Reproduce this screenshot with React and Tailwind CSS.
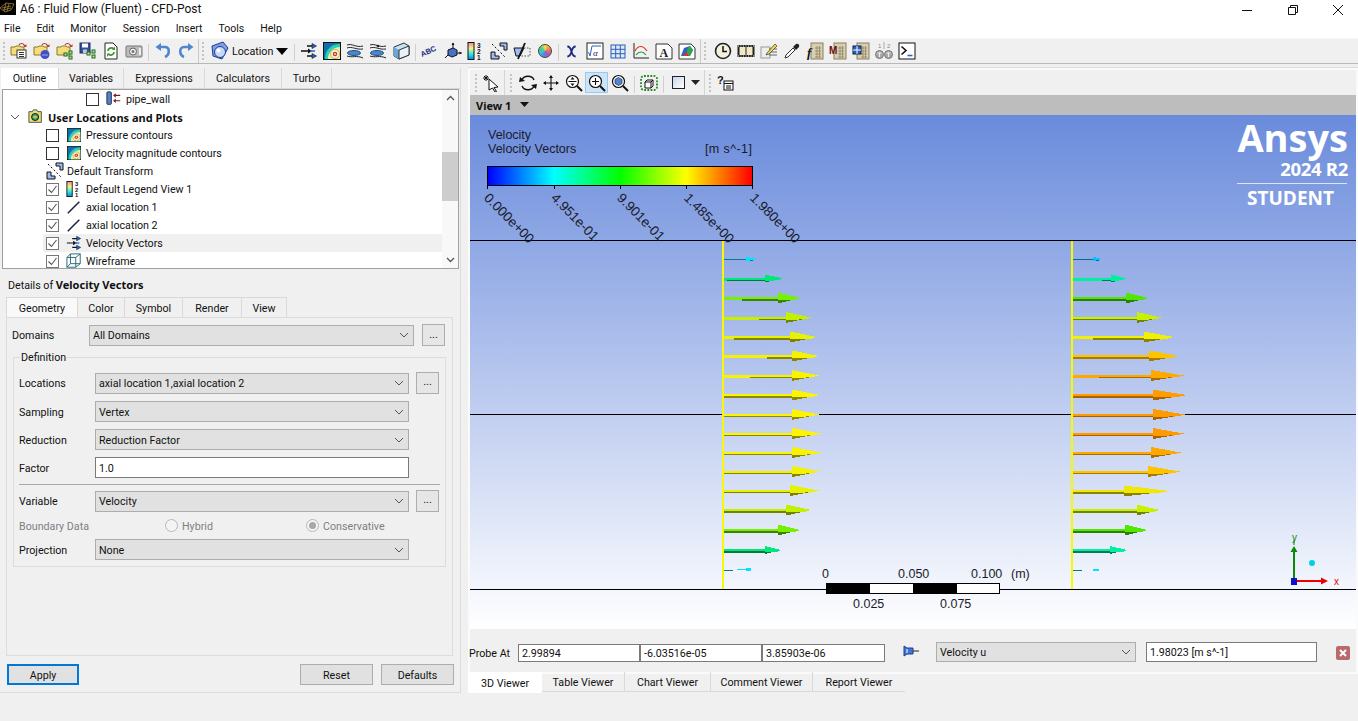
import React from "react";

const UI = "font-['Roboto',sans-serif]";
const BOLD = "font-['Noto_Sans',sans-serif] font-bold";

// small svg wrapper for toolbar icons, drawn on an 18 unit grid
function Ic({ children, s = 18 }) {
  return (
    <svg width={s} height={s} viewBox="0 0 18 18" fill="none">
      {children}
    </svg>
  );
}

function Btn({ children }) {
  return <div className="w-[23px] h-[24px] shrink-0 flex items-center justify-center">{children}</div>;
}

function Sep({ w = "w-[6px]" }) {
  return (
    <div className={`${w} shrink-0 flex justify-center`}>
      <div className="w-px h-[17px] bg-[#d0d0d0] mt-[3px]" />
    </div>
  );
}

function Grip() {
  return (
    <div className="w-[6px] shrink-0 flex flex-col gap-[2px] items-center justify-center">
      {[0, 1, 2, 3, 4].map((i) => (
        <div key={i} className="w-[2px] h-[2px] bg-[#c4c4c4]" />
      ))}
    </div>
  );
}

function Folder({ children }) {
  return (
    <Ic>
      <path d="M1 5h4l1-1h4l1 1h3v8H1z" fill="#f7dc7a" stroke="#8a7a2a" />
      <path d="M9 3c1-2 4-2 5 0l1 1" stroke="#c0392b" strokeWidth="1.2" />
      <path d="M16.5 2v3h-3z" fill="#c0392b" />
      {children}
    </Ic>
  );
}

function TreeNodes({ x = 8, y = 9 }) {
  return (
    <g fill="#b6e3a8" stroke="#1d6b1d">
      <rect x={x} y={y + 2} width="3" height="3" />
      <rect x={x + 5} y={y} width="3" height="3" />
      <rect x={x + 5} y={y + 5} width="3" height="3" />
    </g>
  );
}

const IconFolderDoc = () => (
  <Folder>
    <rect x="7" y="8" width="9" height="8" fill="#fff" stroke="#333" />
    <path d="M9 10.5h5M9 12.5h5M9 14.5h5" stroke="#333" />
  </Folder>
);
const IconFolderDots = () => (
  <Folder>
    <circle cx="12" cy="12.5" r="4.5" fill="#3f51c8" />
    <path d="M9.5 13h1M11.5 13h1M13.5 13h1" stroke="#fff" />
  </Folder>
);
const IconFolderTree = () => (
  <Folder>
    <TreeNodes />
  </Folder>
);
const IconSaveTree = () => (
  <Ic>
    <rect x="1" y="1" width="10" height="10" fill="#2f4f9f" stroke="#1c2f66" />
    <rect x="3" y="1.5" width="6" height="4" fill="#fff" />
    <rect x="4" y="7.5" width="4" height="3.5" fill="#c8c8c8" />
    <TreeNodes x={8} y={8} />
  </Ic>
);
const IconReload = () => (
  <Ic>
    <path d="M3 1h8l4 4v12H3z" fill="#fff" stroke="#222" />
    <path d="M6 9c0-3 4-4 6-2M12 10c0 3-4 4-6 2" stroke="#3f9a2b" strokeWidth="1.6" />
    <path d="M13 4.5v3.5h-3zM5 15v-3.500h3z" fill="#3f9a2b" />
  </Ic>
);
const IconCamera = () => (
  <Ic>
    <rect x="1" y="4" width="16" height="11" rx="1" fill="#bdbdbd" stroke="#777" />
    <circle cx="8" cy="9.500" r="3.500" fill="#eee" stroke="#666" />
    <circle cx="8" cy="9.500" r="1.500" fill="#777" />
    <rect x="14" y="6" width="2" height="7" fill="#eee" />
  </Ic>
);
const IconUndo = () => (
  <Ic>
    <path d="M5 5h6c5 0 5 8 0 10" stroke="#4f86cf" strokeWidth="2.600" />
    <path d="M7 1v8L1.500 5z" fill="#4f86cf" />
  </Ic>
);
const IconRedo = () => (
  <Ic>
    <path d="M13 5H7c-5 0-5 8 0 10" stroke="#4f86cf" strokeWidth="2.600" />
    <path d="M11 1v8l5.500-4z" fill="#4f86cf" />
  </Ic>
);
const IconLocation = () => (
  <svg width="20" height="20" viewBox="0 0 20 20" fill="none">
    <path d="M2 5l11-4 5 6-6 11-9-3z" fill="#7da0e8" stroke="#1f3f8f" />
    <circle cx="10" cy="11" r="5.500" fill="#c8d8f5" stroke="#1f3f8f" />
    <circle cx="8.500" cy="9.500" r="2" fill="#fff" />
  </svg>
);
const IconVectors = ({ s = 18 }) => (
  <Ic s={s}>
    <path d="M1 9h7M7 4h6M7 14h6" stroke="#111" strokeWidth="1.300" />
    <path d="M8 6.500V11.500L12 9z" fill="#111" />
    <path d="M12 1.500v5l4.500-2.500zM12 11.500v5l4.500-2.500z" fill="#2b62c4" stroke="#111" strokeWidth=".6" />
    <path d="M10 9h5" stroke="#2b62c4" strokeWidth="1.500" />
  </Ic>
);
const IconContour = ({ s = 18 }) => (
  <Ic s={s}>
    <rect x=".5" y=".5" width="17" height="17" fill="#0f6fb0" stroke="#111" />
    <path d="M2 17C2 8 8 2 17 2v15z" fill="#26d0b0" />
    <path d="M5 17c0-7 5-12 12-12v12z" fill="#e8f2b0" />
    <circle cx="12" cy="12" r="4.500" fill="#f4f4f4" stroke="#d8b030" />
    <circle cx="12" cy="12" r="2.300" fill="#d8342b" />
    <circle cx="12" cy="12" r="1" fill="#f4e060" />
  </Ic>
);
const IconStream = ({ dots }) => (
  <Ic>
    <path d="M1 3c5-2 9 3 16 1M1 6c5-2 9 2 16 1" stroke="#222" />
    <path d="M1 14c5 2 10-1 16 2" stroke="#222" />
    <ellipse cx="8" cy="11" rx="6.500" ry="2.500" fill="#4a86c8" stroke="#1f4f8a" />
    {dots && <circle cx="9" cy="4" r="1.300" fill="#222" />}
  </Ic>
);
const IconCube = () => (
  <Ic>
    <path d="M2 5l10-4 5 3v9l-10 4-5-3z" fill="#c6e3f5" stroke="#333" />
    <path d="M7 8v9l-5-3V5z" fill="#6aa7d8" />
    <path d="M7 8l10-4v9L7 17z" fill="#e8f2fa" stroke="#333" />
  </Ic>
);
const IconAbc = () => (
  <svg width="18" height="18" viewBox="0 0 18 18" fill="none" className="overflow-visible">
    <text x="1" y="15" transform="rotate(-25 1 15)" fontSize="7.500" fontWeight="700" fill="#1c2a80" fontFamily="'Liberation Sans',sans-serif">
      ABC
    </text>
  </svg>
);
const IconAxisCube = () => (
  <Ic>
    <path d="M4 8l5-2 4 2v5l-5 2-4-2z" fill="#4a6fc8" stroke="#111" />
    <path d="M9 6V1M13 11h4.500M4 13l-3 3" stroke="#111" />
    <path d="M7.500 3L9 .5 10.500 3zM15.500 9.500L18 11l-2.500 1.500z" fill="#111" />
  </Ic>
);
const IconLegend = ({ s = 18 }) => (
  <Ic s={s}>
    <defs>
      <linearGradient id="lg" x1="0" y1="0" x2="0" y2="1">
        <stop offset="0" stopColor="#f08a9a" />
        <stop offset=".35" stopColor="#f6f28a" />
        <stop offset=".7" stopColor="#20e8e0" />
        <stop offset="1" stopColor="#1080f0" />
      </linearGradient>
    </defs>
    <rect x="1" y=".5" width="6" height="17" fill="url(#lg)" stroke="#111" />
    <text x="10" y="6" fontSize="6.500" fontWeight="700" fill="#111" fontFamily="'Liberation Sans',sans-serif">3</text>
    <text x="10" y="12" fontSize="6.500" fontWeight="700" fill="#111" fontFamily="'Liberation Sans',sans-serif">2</text>
    <text x="10" y="18" fontSize="6.500" fontWeight="700" fill="#111" fontFamily="'Liberation Sans',sans-serif">1</text>
  </Ic>
);
const IconTransform = () => (
  <Ic>
    <path d="M10 1h7v7h-3V4h-4z" fill="#9dbcf0" stroke="#111" />
    <path d="M1 10h4v4h4v3H1z" fill="#9dbcf0" stroke="#111" />
    <path d="M2 2l14 14" stroke="#111" strokeDasharray="2 2" />
  </Ic>
);
const IconClip = () => (
  <Ic>
    <path d="M1 6h10l-4 8H3z" fill="#9dbcf0" stroke="#111" />
    <path d="M11 6h6v8H7" stroke="#555" strokeDasharray="1.500 1.500" />
    <path d="M12 1L5 17" stroke="#111" strokeWidth="1.800" />
  </Ic>
);
const IconWheel = () => (
  <div className="w-[14px] h-[14px] rounded-full border border-[#444] bg-[conic-gradient(#f5e050,#f09040,#e85a8a,#8a60d8,#4a90e8,#30c8e0,#50d070,#f5e050)]" />
);
const IconXExpr = () => (
  <Ic s={15}>
    <path d="M4 3c3 0 4 2 5 6s2 6 5 6M14 3c-3 0-4 2-5 6s-2 6-5 6" stroke="#1c2a80" strokeWidth="2.200" />
  </Ic>
);
const IconFunc = () => (
  <Ic>
    <rect x="1" y="1" width="16" height="16" fill="#fff" stroke="#222" />
    <path d="M2.500 10l1.500 4 2-10h9" stroke="#2b62c4" />
    <text x="7" y="14" fontSize="9" fill="#1c2a80" fontStyle="italic" fontFamily="'Liberation Serif',serif">α</text>
  </Ic>
);
const IconTable = () => (
  <Ic>
    <rect x="2" y="3" width="14" height="13" fill="#dfe9fa" stroke="#2b5fb8" />
    <path d="M2 7.300h14M2 11.700h14M6.700 3v13M11.300 3v13" stroke="#2b5fb8" />
  </Ic>
);
const IconChart = () => (
  <Ic>
    <path d="M2 1v15h15" stroke="#222" />
    <path d="M3 9c3-6 8-6 12 0" stroke="#d8342b" strokeWidth="1.200" />
    <path d="M4 13c3-4 7-4 10 0" stroke="#2f9a3a" strokeWidth="1.200" />
  </Ic>
);
const IconPageA = () => (
  <Ic>
    <path d="M1 2h12l4 4v11H1z" fill="#fff" stroke="#333" />
    <text x="4.500" y="14.500" fontSize="12" fontWeight="700" fill="#222" fontFamily="'Liberation Serif',serif">A</text>
  </Ic>
);
const IconPageColor = () => (
  <Ic>
    <path d="M1 2h12l4 4v11H1z" fill="#fff" stroke="#333" />
    <path d="M3 14l3-8 6-2 3 4-3 6z" fill="#2b62c4" />
    <path d="M8 14l2-9 2-1 3 4-3 6z" fill="#2fa84a" />
    <path d="M5 14l3-4 3 4z" fill="#d8342b" />
  </Ic>
);
const IconClock = () => (
  <Ic>
    <circle cx="9" cy="9" r="7.500" fill="#f5f0dc" stroke="#222" strokeWidth="1.600" />
    <path d="M9 4v5.500h4" stroke="#111" strokeWidth="1.500" />
  </Ic>
);
const IconFilm = () => (
  <Ic>
    <rect x=".5" y="3" width="17" height="12" fill="#222" />
    <rect x="2.500" y="5" width="6" height="8" fill="#f2e8c8" />
    <rect x="9.500" y="5" width="6" height="8" fill="#f2e8c8" />
    <path d="M1 4h16M1 14h16" stroke="#eee" strokeDasharray="1 1.500" />
  </Ic>
);
const IconNotes = () => (
  <Ic>
    <rect x="1" y="5" width="9" height="11" fill="#eee" stroke="#999" />
    <path d="M9 7h8M9 10h8M9 13h8" stroke="#666" />
    <path d="M7 11L15 2l2 2-8 8-3 1z" fill="#f5d840" stroke="#333" strokeWidth=".7" />
  </Ic>
);
const IconDropper = () => (
  <Ic>
    <path d="M2 16l1-3 7-7 2 2-7 7z" fill="#fff" stroke="#333" />
    <path d="M10 5l3-3c2-1 4 1 3 3l-3 3z" fill="#222" />
  </Ic>
);
function Calc({ children }) {
  return (
    <Ic>
      <rect x="5" y="1" width="12" height="16" fill="#d8ceb0" stroke="#8a8060" />
      <path d="M9 6h6M9 9h6M9 12h6M9 15h6M11 4v12M13.500 4v12" stroke="#8a8060" strokeWidth=".7" />
      {children}
    </Ic>
  );
}
const IconCalcF = () => (
  <Calc>
    <text x="1" y="15" fontSize="13" fontWeight="700" fontStyle="italic" fill="#111" fontFamily="'Liberation Serif',serif">f</text>
  </Calc>
);
const IconCalcM = () => (
  <Calc>
    <text x="0" y="12" fontSize="10" fontWeight="700" fill="#6b0f0f" fontFamily="'Liberation Sans',sans-serif">M</text>
  </Calc>
);
const IconCalcB = () => (
  <Calc>
    <rect x="1" y="4" width="8" height="8" fill="#2b5fd0" stroke="#123" />
    <path d="M1 8h8M5 4v8" stroke="#fff" />
  </Calc>
);
const IconBino = () => (
  <Ic>
    <text x="3" y="6" fontSize="6" fill="#888" fontFamily="'Liberation Sans',sans-serif">1</text>
    <text x="12" y="6" fontSize="6" fill="#888" fontFamily="'Liberation Sans',sans-serif">2</text>
    <path d="M9 0v7" stroke="#aaa" />
    <circle cx="4.500" cy="12.500" r="4" fill="#aaa" stroke="#777" />
    <circle cx="13.500" cy="12.500" r="4" fill="#aaa" stroke="#777" />
    <path d="M2.500 11h4M4.500 11v4M11.500 11h4M13.500 11v4" stroke="#eee" />
  </Ic>
);
const IconTerm = () => (
  <Ic>
    <rect x="1" y="1" width="16" height="16" fill="#fff" stroke="#111" />
    <path d="M3.500 4.500L8 8.500l-4.500 4" stroke="#111" strokeWidth="1.600" />
    <path d="M9.500 13.500h5" stroke="#2b62c4" strokeWidth="1.600" />
  </Ic>
);
const IconPick = () => (
  <Ic>
    <path d="M6 5l9 8-4 .5 2.500 4-1.500.5-2.500-4L6 16z" fill="#fff" stroke="#111" />
    <path d="M3 1v6M0 4h6M1 2l4 4M5 2L1 6" stroke="#111" />
  </Ic>
);
const IconRotate = () => (
  <Ic>
    <path d="M15 6C13 1 5 1 3 6M3 12c2 5 10 5 12 0" stroke="#111" strokeWidth="1.400" />
    <path d="M1 3l5 4-6 1zM17 15l-5-4 6-1z" fill="#111" />
  </Ic>
);
const IconPan = () => (
  <Ic>
    <path d="M9 2v14M2 9h14" stroke="#111" strokeWidth="1.100" />
    <path d="M7 4l2-3 2 3zM7 14l2 3 2-3zM4 7L1 9l3 2zM14 7l3 2-3 2z" fill="#111" />
  </Ic>
);
function Lens({ children }) {
  return (
    <Ic>
      <circle cx="7.500" cy="7.500" r="6" fill="#fff" stroke="#111" strokeWidth="1.200" />
      <path d="M12 12l5 5" stroke="#111" strokeWidth="2" />
      {children}
    </Ic>
  );
}
const IconZoomFit = () => (
  <Lens>
    <path d="M3.500 7.500h8" stroke="#111" />
    <path d="M5.500 5.500l2-2.500 2 2.500zM5.500 9.500l2 2.500 2-2.500z" fill="#111" />
  </Lens>
);
const IconZoomBox = () => (
  <Lens>
    <path d="M7.500 4v7M4 7.500h7" stroke="#111" strokeWidth="1.100" />
  </Lens>
);
const IconZoomCube = () => (
  <Lens>
    <path d="M4 5.500l3.500-2 3.500 2v4l-3.500 2-3.500-2z" fill="#4f86cf" stroke="#1c2a50" strokeWidth=".7" />
  </Lens>
);
const IconDotted = () => (
  <Ic>
    <rect x="1" y="2" width="16" height="14" rx="3" stroke="#1f8a1f" strokeWidth="1.800" strokeDasharray="1.800 1.400" />
    <path d="M5 8l2-2h6v6l-2 2H5z" fill="#fff" stroke="#111" />
    <path d="M5 8h6v6M11 8l2-2" stroke="#111" />
  </Ic>
);
const IconWireframe = () => (
  <Ic s={16}>
    <path d="M1 5h10v11H1zM5 1h11v11H5zM1 5l4-4M11 5l5-4M11 16l5-4M1 16l4-4" stroke="#2d6a78" strokeWidth="1.100" />
  </Ic>
);
const IconLine = () => (
  <Ic s={16}>
    <path d="M2 16L15 3" stroke="#1c2340" strokeWidth="1.700" />
  </Ic>
);
const IconWall = () => (
  <Ic s={16}>
    <rect x="1" y="1" width="5" height="14" rx="1" fill="#4a86d8" stroke="#222" />
    <path d="M16 5H9M16 11H9" stroke="#7a1a1a" strokeWidth="1.300" />
    <path d="M11 2.500L8 5l3 2.500zM11 8.500L8 11l3 2.500z" fill="#7a1a1a" />
  </Ic>
);
const IconFolderUser = () => (
  <Ic s={16}>
    <path d="M1 3h4l1-2h4l1 2h4v12H1z" fill="#e8e070" stroke="#444" />
    <circle cx="8" cy="9" r="4" fill="#2f9a7a" stroke="#111" />
    <path d="M5 9l3-2 3 2-3 2z" fill="#d8c040" />
  </Ic>
);

function Check({ on }) {
  return (
    <div className={`w-[13px] h-[13px] shrink-0 bg-white border flex items-center justify-center ${on ? "border-[#777]" : "border-[#333]"}`}>
      {on && (
        <svg width="11" height="11" viewBox="0 0 11 11" fill="none">
          <path d="M1.500 5.500l3 3 5-6.500" stroke="#555" strokeWidth="1.100" />
        </svg>
      )}
    </div>
  );
}

function TreeRow({ on, icon, label, active }) {
  return (
    <div className={`h-[18px] ml-[40px] pl-[3px] flex items-center ${active ? "bg-[#f0f0f0]" : ""}`}>
      <Check on={on} />
      <div className="w-[16px] ml-[7px] mr-[4px] flex justify-center shrink-0">{icon}</div>
      <span className="whitespace-nowrap pt-[3px]">{label}</span>
    </div>
  );
}

function Chevron() {
  return (
    <svg width="10" height="6" viewBox="0 0 10 6" fill="none" className="shrink-0">
      <path d="M1 1l4 4 4-4" stroke="#555" />
    </svg>
  );
}

function Combo({ text, w = "w-[314px]", h = "h-[21px]" }) {
  return (
    <div className={`${w} ${h} shrink-0 bg-[#e1e1e1] border border-[#adadad] flex items-center justify-between pl-[3px] pr-[4px]`}>
      <span className="whitespace-nowrap pt-[3px]">{text}</span>
      <Chevron />
    </div>
  );
}

function Dots() {
  return <div className="w-[23px] h-[22px] shrink-0 ml-[7px] bg-[#e6e6e6] border border-[#adadad] flex items-center justify-center leading-none pb-[1px]">...</div>;
}

function Field({ label, children, cls = "" }) {
  return (
    <div className={`flex items-center pl-[5px] ${cls}`}>
      <div className="w-[76px] shrink-0 whitespace-nowrap pt-[3px]">{label}</div>
      {children}
    </div>
  );
}

function Radio({ on, label, cls }) {
  return (
    <div className={`flex items-center text-[#808080] ${cls}`}>
      <div className="w-[13px] h-[13px] rounded-full bg-[#f4f4f4] border border-[#b8b8b8] flex items-center justify-center mr-[4px]">
        {on && <div className="w-[7px] h-[7px] rounded-full bg-[#a8a8a8]" />}
      </div>
      <span className="pt-[3px]">{label}</span>
    </div>
  );
}

function Tab({ label, w, active }) {
  return (
    <div className={`${w} shrink-0 flex items-center justify-center pt-[3px] border-r border-b border-[#d9d9d9] ${active ? "bg-white border-b-white" : "bg-[#f0f0f0]"}`}>
      {label}
    </div>
  );
}

// y, tip, head start, colour, dark colour, where the dark underside starts
const leftArrows = [
  [259, 756, 746, "#00e4ff", "#007f90", 724],
  [278.5, 782, 765, "#00e878", "#007a3c", 727],
  [298, 801, 778, "#74f000", "#3e8000", 742],
  [317.5, 811, 786, "#c4f000", "#6e8400", 759],
  [337, 817, 790, "#e6f200", "#807f00", 734],
  [356, 819, 792, "#f4f200", "#878400", 767],
  [375.5, 819, 792, "#f8f400", "#8a8600", 750],
  [395, 820, 792, "#fcf400", "#8c8800", 724],
  [414.5, 819, 792, "#fcf400", "#8c8800", 724],
  [433.5, 821, 792, "#fcf400", "#8c8800", 724],
  [452.5, 821, 792, "#f8f400", "#8a8600", 724],
  [471.5, 820, 792, "#f4f200", "#878400", 724],
  [490.5, 819, 790, "#e6f200", "#807f00", 724],
  [510, 811, 786, "#c4f000", "#6e8400", 724],
  [530, 800, 778, "#74f000", "#3e8000", 724],
  [550, 781, 765, "#00e878", "#007a3c", 724],
];

const rightArrows = [
  [259, 1101, 1093, "#00c4ff", "#006a90", 1073],
  [278.5, 1126, 1111, "#00f0a0", "#007a58", 1102],
  [298, 1148, 1126, "#50e800", "#2c8000", 1073],
  [317.5, 1161, 1137, "#c8f000", "#708400", 1073],
  [337, 1174, 1144, "#f0f000", "#888400", 1093],
  [356, 1179, 1149, "#ffc400", "#a87a00", 1073],
  [375.5, 1184, 1151, "#ffa800", "#a86c00", 1099],
  [395, 1187, 1153, "#ff9c00", "#a86400", 1073],
  [414.5, 1185, 1153, "#ff9a00", "#a86000", 1073],
  [433.5, 1184, 1153, "#ff9a00", "#a86000", 1073],
  [452.5, 1181, 1151, "#ffa800", "#a86c00", 1073],
  [471.5, 1180, 1148, "#ffc400", "#a87a00", 1073],
  [491, 1170, 1124, "#f0e800", "#888400", 1073],
  [510, 1160, 1137, "#c8f000", "#708400", 1073],
  [530, 1147, 1125, "#50e800", "#2c8000", 1073],
  [550, 1127, 1110, "#00f0a0", "#007a58", 1073],
];

function Arrow({ row, base }) {
  const [y, tip, head, c, d, ds] = row;
  const len = tip - head;
  const thin = len < 12;
  const hh = thin ? 2.500 : len < 18 ? 4 : 5.500;
  const a = head + len * 0.5;
  const b = head + len * 0.8;
  const top = `${head},${y - hh} ${a},${y - hh * 0.5} ${b},${y - 1} ${tip},${y}`;
  return (
    <g shapeRendering="crispEdges">
      {thin ? (
        <rect x={base} y={y} width={head - base} height="1" fill={d} />
      ) : (
        <>
          <rect x={base} y={y - 1} width={head - base} height="3" fill={c} />
          <rect x={ds} y={y + 1} width={head - ds} height="1.500" fill={d} />
        </>
      )}
      <polygon points={`${top} ${b},${y + 1.500} ${a},${y + hh * 0.5} ${head},${y + hh}`} fill={c} />
      <polygon points={`${head},${y + 2} ${a},${y + 2} ${head + len * 0.7},${y + 1.500} ${a},${y + hh * 0.5} ${head},${y + hh}`} fill={d} />
    </g>
  );
}

function ViewScene() {
  return (
    <svg className="absolute inset-0" width="886" height="514" viewBox="470 115 886 514" fill="none">
      <path d="M470 240.500h886M470 414.500h886M470 589.500h886" stroke="#000" />
      <rect x="722" y="241" width="2" height="348" fill="#f8f800" />
      <rect x="1071" y="241" width="2" height="348" fill="#f8f800" />
      {leftArrows.map((r) => (
        <Arrow key={r[0]} row={r} base={724} />
      ))}
      {rightArrows.map((r) => (
        <Arrow key={r[0]} row={r} base={1073} />
      ))}
      <path d="M724 570.500h9" stroke="#007a88" />
      <path d="M737 569.500h11" stroke="#00e4ff" />
      <rect x="746" y="568" width="5" height="3" fill="#00e4ff" />
      <path d="M1073 570.500h9" stroke="#007a88" />
      <rect x="1093" y="569" width="6" height="2" fill="#00e4ff" />
      {/* triad */}
      <path d="M1294 581v-30" stroke="#0a8a0a" strokeWidth="2" />
      <path d="M1290.500 552l3.500-6 3.500 6z" fill="#0a8a0a" />
      <path d="M1294 545v-5" stroke="#0a8a0a" />
      <path d="M1295 581h26" stroke="#f00000" strokeWidth="2" />
      <path d="M1321 577.500l7 3.500-7 3.500z" fill="#f00000" />
      <rect x="1291" y="578" width="6" height="7" fill="#1010d0" />
      <circle cx="1312" cy="563" r="3" fill="#00d0e0" />
      <text x="1334" y="585" fontSize="10" fill="#e00000" fontFamily="'Liberation Sans',sans-serif">x</text>
      <text x="1292" y="541" fontSize="10" fill="#0a8a0a" fontFamily="'Liberation Sans',sans-serif">y</text>
    </svg>
  );
}

function ViewOverlay() {
  return (
    <div className="font-['Liberation_Sans',sans-serif] text-[12.5px] text-[#1a1a2a] leading-none">
      <div className="absolute left-[18px] top-[14px]">Velocity</div>
      <div className="absolute left-[18px] top-[28px]">Velocity Vectors</div>
      <div className="absolute left-[235px] top-[28px] tracking-[0.4px]">[m s^-1]</div>
      <div className="absolute left-[17px] top-[51px] w-[266px] h-[20px] border border-black bg-[linear-gradient(to_right,#0000ff,#00ffff_25%,#00ff00_50%,#ffff00_75%,#ff0000)]" />
      <div className="absolute left-[17px] top-[71px] w-px h-[3px] bg-black" />
      <div className="absolute left-[84px] top-[71px] w-px h-[3px] bg-black" />
      <div className="absolute left-[150px] top-[71px] w-px h-[3px] bg-black" />
      <div className="absolute left-[216px] top-[71px] w-px h-[3px] bg-black" />
      <div className="absolute left-[282px] top-[71px] w-px h-[3px] bg-black" />
      <div className="absolute left-[21px] top-[76px] origin-top-left rotate-[45deg] text-[13.500px]">0.000e+00</div>
      <div className="absolute left-[88px] top-[76px] origin-top-left rotate-[45deg] text-[13.500px]">4.951e-01</div>
      <div className="absolute left-[154px] top-[76px] origin-top-left rotate-[45deg] text-[13.500px]">9.901e-01</div>
      <div className="absolute left-[221px] top-[76px] origin-top-left rotate-[45deg] text-[13.500px]">1.485e+00</div>
      <div className="absolute left-[287px] top-[76px] origin-top-left rotate-[45deg] text-[13.500px]">1.980e+00</div>

      <div className="absolute left-[352px] top-[453px]">0</div>
      <div className="absolute left-[428px] top-[453px]">0.050</div>
      <div className="absolute left-[501px] top-[453px]">0.100</div>
      <div className="absolute left-[541px] top-[453px]">(m)</div>
      <div className="absolute left-[356px] top-[468px] w-[174px] h-[11px] border border-black flex">
        <div className="w-[43px] bg-black" />
        <div className="w-[43px] bg-white" />
        <div className="w-[44px] bg-black" />
        <div className="flex-1 bg-white" />
      </div>
      <div className="absolute left-[383px] top-[483px]">0.025</div>
      <div className="absolute left-[470px] top-[483px]">0.075</div>

      <div className="absolute right-[8px] top-[2px] text-right font-['Open_Sans',sans-serif] font-bold text-white">
        <div className="text-[38px] leading-[40px]">Ansys</div>
        <div className="text-[18.500px] leading-[20px] mt-[2px] tracking-[-0.3px]">2024 R2</div>
      </div>
      <div className="absolute left-[767px] top-[68px] w-[110px] h-[1px] bg-[#dce4f8]" />
      <div className="absolute left-[777px] top-[73px] font-['Open_Sans',sans-serif] font-bold text-white text-[19px] leading-[20px]">STUDENT</div>
    </div>
  );
}

function ProbeInput({ text, w, h = "h-[18px]", cls = "" }) {
  return <div className={`${w} ${h} shrink-0 bg-white border border-[#7a7a7a] pl-[3px] pt-[2px] flex items-center ${cls}`}>{text}</div>;
}

function Push({ w, label, cls = "" }) {
  return <div className={`${w} h-[21px] bg-[#e1e1e1] border border-[#adadad] flex items-center justify-center pt-[3px] ${cls}`}>{label}</div>;
}

export default function App() {
  return (
    <div className={`w-[1358px] h-[721px] overflow-hidden bg-[#f0f0f0] text-[10.700px] leading-none text-[#111] flex flex-col ${UI}`}>
      {/* title bar */}
      <div className="h-[20px] bg-white flex items-center shrink-0 relative">
        <div className="w-[16px] h-[15px] self-start bg-black overflow-hidden">
          <svg width="16" height="15" viewBox="0 0 16 15" fill="none">
            <path d="M0 8l6-5 8 1-3 6-6 2zM2 8l9-2M3 10l8-2M6 3l-2 8M9 4l-2 7" stroke="#a8843a" strokeWidth=".8" />
          </svg>
        </div>
        <span className="ml-[4px] text-[12px] whitespace-nowrap pb-[2px]">A6 : Fluid Flow (Fluent) - CFD-Post</span>
        <div className="flex-1" />
        <div className="flex -mr-[3px]">
          <div className="w-[46px] flex justify-center">
            <svg width="12" height="12" viewBox="0 0 12 12"><path d="M1 6.500h10" stroke="#111" /></svg>
          </div>
          <div className="w-[45px] flex justify-center">
            <svg width="12" height="12" viewBox="0 0 12 12" fill="none"><path d="M1.500 3.500h7v7h-7zM3.500 3.500v-2h7v7h-2" stroke="#111" /></svg>
          </div>
          <div className="w-[46px] flex justify-center">
            <svg width="12" height="12" viewBox="0 0 12 12" fill="none"><path d="M1 1l10 10M11 1L1 11" stroke="#111" /></svg>
          </div>
        </div>
      </div>

      {/* menu bar */}
      <div className="h-[18px] bg-white flex items-center gap-[16px] pl-[4px] shrink-0 text-[10.500px]">
        {["File", "Edit", "Monitor", "Session", "Insert", "Tools", "Help"].map((m) => (
          <span key={m}>{m}</span>
        ))}
      </div>

      {/* main toolbar */}
      <div className="h-[26px] shrink-0 border-t border-t-[#f8f8f8] border-b border-b-[#b8b8b8] flex items-center pl-[1px]">
        <Grip />
        <Btn><IconFolderDoc /></Btn>
        <Btn><IconFolderDots /></Btn>
        <Btn><IconFolderTree /></Btn>
        <Btn><IconSaveTree /></Btn>
        <Btn><IconReload /></Btn>
        <Btn><IconCamera /></Btn>
        <Sep />
        <Btn><IconUndo /></Btn>
        <Btn><IconRedo /></Btn>
        <div className="w-[3px] h-full shrink-0 flex justify-center"><div className="w-px h-full bg-[#c8c8c8]" /></div>
        <Grip />
        <div className="w-[85px] shrink-0 flex items-center pl-[4px]">
          <IconLocation />
          <span className="ml-[2px] w-[40px] whitespace-nowrap pt-[2px]">Location</span>
          <svg width="12" height="7" viewBox="0 0 12 7" className="ml-[4px]"><path d="M0 0h12L6 7z" fill="#000" /></svg>
        </div>
        <Sep w="w-[6px]" />
        <Btn><IconVectors /></Btn>
        <Btn><IconContour /></Btn>
        <Btn><IconStream /></Btn>
        <Btn><IconStream dots /></Btn>
        <Btn><IconCube /></Btn>
        <Sep />
        <Btn><IconAbc /></Btn>
        <Btn><IconAxisCube /></Btn>
        <Btn><IconLegend /></Btn>
        <Btn><IconTransform /></Btn>
        <Btn><IconClip /></Btn>
        <Btn><IconWheel /></Btn>
        <Sep w="w-[4px]" />
        <Btn><IconXExpr /></Btn>
        <Btn><IconFunc /></Btn>
        <Btn><IconTable /></Btn>
        <Btn><IconChart /></Btn>
        <Btn><IconPageA /></Btn>
        <Btn><IconPageColor /></Btn>
        <div className="w-[4px] h-full shrink-0 flex justify-center"><div className="w-px h-full bg-[#c8c8c8]" /></div>
        <Grip />
        <div className="w-[3px] shrink-0" />
        <Btn><IconClock /></Btn>
        <Btn><IconFilm /></Btn>
        <Btn><IconNotes /></Btn>
        <Btn><IconDropper /></Btn>
        <Btn><IconCalcF /></Btn>
        <Btn><IconCalcM /></Btn>
        <Btn><IconCalcB /></Btn>
        <Btn><IconBino /></Btn>
        <Btn><IconTerm /></Btn>
      </div>

      <div className="flex-1 flex min-h-0">
        {/* left panel */}
        <div className="w-[461px] h-[625px] shrink-0 mt-[4px] border-r border-b border-[#dcdcdc] flex flex-col">
          <div className="h-[21px] flex shrink-0 pl-px">
            <Tab label="Outline" w="w-[58px]" active />
            <Tab label="Variables" w="w-[65px]" />
            <Tab label="Expressions" w="w-[81px]" />
            <Tab label="Calculators" w="w-[77px]" />
            <Tab label="Turbo" w="w-[50px]" />
            <div className="flex-1 border-b border-[#d9d9d9]" />
          </div>

          <div className="ml-[2px] w-[457px] h-[180px] shrink-0 bg-white border border-[#a0a0a0] flex overflow-hidden">
            <div className="flex-1 overflow-hidden">
              <div className="h-[18px] ml-[83px] flex items-center">
                <Check />
                <div className="w-[16px] ml-[7px] mr-[4px] flex justify-center shrink-0"><IconWall /></div>
                <span className="pt-[3px]">pipe_wall</span>
              </div>
              <div className="h-[18px] flex items-center pl-[7px]">
                <Chevron />
                <div className="ml-[8px] mr-[4px] flex"><IconFolderUser /></div>
                <span className={`${BOLD} text-[11px] whitespace-nowrap`}>User Locations and Plots</span>
              </div>
              <TreeRow icon={<IconContour s={14} />} label="Pressure contours" />
              <TreeRow icon={<IconContour s={14} />} label="Velocity magnitude contours" />
              <div className="h-[18px] ml-[43px] flex items-center">
                <IconTransform />
                <span className="ml-[3px] whitespace-nowrap pt-[3px]">Default Transform</span>
              </div>
              <TreeRow on icon={<IconLegend s={16} />} label="Default Legend View 1" />
              <TreeRow on icon={<IconLine />} label="axial location 1" />
              <TreeRow on icon={<IconLine />} label="axial location 2" />
              <TreeRow on active icon={<IconVectors s={16} />} label="Velocity Vectors" />
              <TreeRow on icon={<IconWireframe />} label="Wireframe" />
            </div>
            <div className="w-[16px] shrink-0 bg-[#f8f8f8] flex flex-col items-center">
              <div className="h-[16px] flex items-center justify-center">
                <svg width="9" height="6" viewBox="0 0 9 6" fill="none"><path d="M1 5l3.500-3.500L8 5" stroke="#555" strokeWidth="1.300" /></svg>
              </div>
              <div className="h-[46px]" />
              <div className="w-full h-[49px] bg-[#cdcdcd]" />
              <div className="flex-1" />
              <div className="h-[16px] flex items-center justify-center">
                <svg width="9" height="6" viewBox="0 0 9 6" fill="none"><path d="M1 1l3.500 3.500L8 1" stroke="#555" strokeWidth="1.300" /></svg>
              </div>
            </div>
          </div>

          <div className="h-[28px] shrink-0 pl-[8px] pt-[10px]">
            Details of <span className={`${BOLD} text-[11px]`}>Velocity Vectors</span>
          </div>

          <div className="h-[20px] flex shrink-0 pl-[6px]">
            <div className="w-[72px] flex items-center justify-center pt-[3px] bg-[#f9f9f9] border border-[#d9d9d9] border-b-0">Geometry</div>
            <div className="w-[47px] flex items-center justify-center pt-[3px] border-t border-r border-[#d9d9d9]">Color</div>
            <div className="w-[58px] flex items-center justify-center pt-[3px] border-t border-r border-[#d9d9d9]">Symbol</div>
            <div className="w-[59px] flex items-center justify-center pt-[3px] border-t border-r border-[#d9d9d9]">Render</div>
            <div className="w-[45px] flex items-center justify-center pt-[3px] border-t border-r border-[#d9d9d9]">View</div>
          </div>

          <div className="ml-[6px] w-[447px] h-[339px] shrink-0 border border-[#dcdcdc] pt-[6px]">
            <div className="flex items-center pl-[5px]">
              <div className="w-[77px] shrink-0 pt-[3px]">Domains</div>
              <Combo text="All Domains" w="w-[325px]" />
              <div className="w-[23px] h-[22px] shrink-0 ml-[8px] bg-[#e6e6e6] border border-[#adadad] flex items-center justify-center">...</div>
            </div>

            <div className="relative ml-[6px] mt-[11px] w-[433px] h-[210px] border border-[#dcdcdc] pt-[14px]">
              <div className="absolute left-[6px] -top-[5px] px-[1px] bg-[#f0f0f0]">Definition</div>
              <Field label="Locations">
                <Combo text="axial location 1,axial location 2" />
                <Dots />
              </Field>
              <Field label="Sampling" cls="mt-[7px]"><Combo text="Vertex" /></Field>
              <Field label="Reduction" cls="mt-[7px]"><Combo text="Reduction Factor" /></Field>
              <Field label="Factor" cls="mt-[7px]">
                <div className="w-[314px] h-[21px] shrink-0 bg-white border border-[#7a7a7a] flex items-center pl-[3px] pt-[3px]">1.0</div>
              </Field>
              <div className="ml-[5px] mt-[6px] w-[421px] h-px bg-[#a8a8a8]" />
              <Field label="Variable" cls="mt-[5px]">
                <Combo text="Velocity" />
                <Dots />
              </Field>
              <div className="h-[27px] flex items-center pl-[5px] text-[#808080]">
                <div className="w-[146px] shrink-0 pt-[3px]">Boundary Data</div>
                <Radio label="Hybrid" cls="w-[141px]" />
                <Radio on label="Conservative" />
              </div>
              <Field label="Projection"><Combo text="None" /></Field>
            </div>
          </div>

          <div className="flex pl-[7px] pt-[8px]">
            <div className="w-[72px] h-[21px] bg-[#e1e1e1] border-2 border-[#0078d7] flex items-center justify-center pt-[3px]">Apply</div>
            <div className="flex-1" />
            <Push w="w-[73px]" label="Reset" />
            <Push w="w-[73px]" label="Defaults" cls="ml-[8px] mr-[6px]" />
          </div>
        </div>

        {/* right panel */}
        <div className="flex-1 ml-[7px] mt-[3px] h-[625px] flex flex-col border-t border-[#dcdcdc]">
          <div className="flex-1 flex flex-col border-x-2 border-x-[#fafafa] border-b-2 border-b-[#fafafa] min-h-0">
            <div className="h-[2px] shrink-0 bg-[#fafafa]" />
            <div className="h-[25px] shrink-0 flex items-center relative">
              <div className="w-[11px] flex justify-center shrink-0"><Grip /></div>
              <div className="w-[22px] flex justify-center shrink-0"><IconPick /></div>
              <div className="w-px h-full bg-[#d4d4d4] mx-[1px] shrink-0" />
              <div className="w-[10px] flex justify-center shrink-0"><Grip /></div>
              <Btn><IconRotate /></Btn>
              <Btn><IconPan /></Btn>
              <Btn><IconZoomFit /></Btn>
              <div className="w-[23px] h-[21px] shrink-0 bg-[#cce4f7] border border-[#99c9ef] flex items-center justify-center"><IconZoomBox /></div>
              <Btn><IconZoomCube /></Btn>
              <Sep />
              <Btn><IconDotted /></Btn>
              <Sep w="w-[7px]" />
              <div className="w-[23px] flex justify-center shrink-0">
                <div className="w-[13px] h-[13px] border border-[#222] bg-gradient-to-br from-[#c8d4f0] to-white" />
              </div>
              <svg width="9" height="5" viewBox="0 0 9 5" className="shrink-0 ml-[1px]"><path d="M0 0h9L4.500 5z" fill="#222" /></svg>
              <div className="w-[4px] shrink-0" />
              <div className="w-px h-full bg-[#d4d4d4] shrink-0" />
              <div className="w-[9px] flex justify-center shrink-0"><Grip /></div>
              <Btn>
                <Ic>
                  <text x="0" y="10" fontSize="11" fontWeight="700" fill="#111" fontFamily="'Liberation Sans',sans-serif">?</text>
                  <rect x="7" y="7" width="9" height="9" fill="#fff" stroke="#111" />
                  <path d="M7 9.500h9M9 12h5M9 14h5" stroke="#111" />
                </Ic>
              </Btn>
            </div>
            <div className="h-[20px] shrink-0 bg-[#bdbdbd] flex items-center pl-[6px]">
              <span className={`${BOLD} text-[11px]`}>View 1</span>
              <svg width="9" height="5" viewBox="0 0 9 5" className="ml-[9px] mb-[2px]"><path d="M0 0h9L4.500 5z" fill="#111" /></svg>
            </div>
            <div className="relative h-[514px] shrink-0 bg-[linear-gradient(to_bottom,#6a8bdc,#ffffff)]">
              <ViewScene />
              <ViewOverlay />
            </div>
            <div className="flex-1 flex items-start pt-[13px] min-h-0">
              <span className="w-[49px] shrink-0 whitespace-nowrap pt-[7px] -ml-px">Probe At</span>
              <div className="flex mt-[2px]">
                <ProbeInput text="2.99894" w="w-[122px]" />
                <ProbeInput text="-6.03516e-05" w="w-[122px]" />
                <ProbeInput text="3.85903e-06" w="w-[123px]" />
              </div>
              <div className="w-[51px] shrink-0 flex justify-center mt-[3px]">
                <svg width="16" height="12" viewBox="0 0 16 12" fill="none">
                  <path d="M1 1v10l3-2h6V3H4z" fill="#3f74d8" stroke="#1c3f90" />
                  <path d="M4 4v4" stroke="#fff" />
                  <path d="M10 6h6" stroke="#222" />
                </svg>
              </div>
              <Combo text="Velocity u" w="w-[200px]" h="h-[20px]" />
              <ProbeInput text="1.98023 [m s^-1]" w="w-[171px]" h="h-[20px]" cls="ml-[10px]" />
              <div className="w-[14px] h-[14px] shrink-0 ml-[19px] mt-[4px] bg-[#b96a6a] rounded-[2px] flex items-center justify-center">
                <svg width="10" height="10" viewBox="0 0 10 10"><path d="M2 2l6 6M8 2L2 8" stroke="#fff" strokeWidth="2" /></svg>
              </div>
            </div>
          </div>
          <div className="h-[20px] shrink-0 flex -mt-[2px]">
            <div className="w-[74px] h-[21px] bg-white flex items-center justify-center pt-[4px]">3D Viewer</div>
            <div className="w-[83px] h-[20px] flex items-center justify-center pt-[4px] border-r border-b border-[#d9d9d9]">Table Viewer</div>
            <div className="w-[86px] h-[20px] flex items-center justify-center pt-[4px] border-r border-b border-[#d9d9d9]">Chart Viewer</div>
            <div className="w-[102px] h-[20px] flex items-center justify-center pt-[4px] border-r border-b border-[#d9d9d9]">Comment Viewer</div>
            <div className="w-[92px] h-[20px] flex items-center justify-center pt-[4px] border-b border-[#d9d9d9]">Report Viewer</div>
          </div>
        </div>
      </div>
    </div>
  );
}
